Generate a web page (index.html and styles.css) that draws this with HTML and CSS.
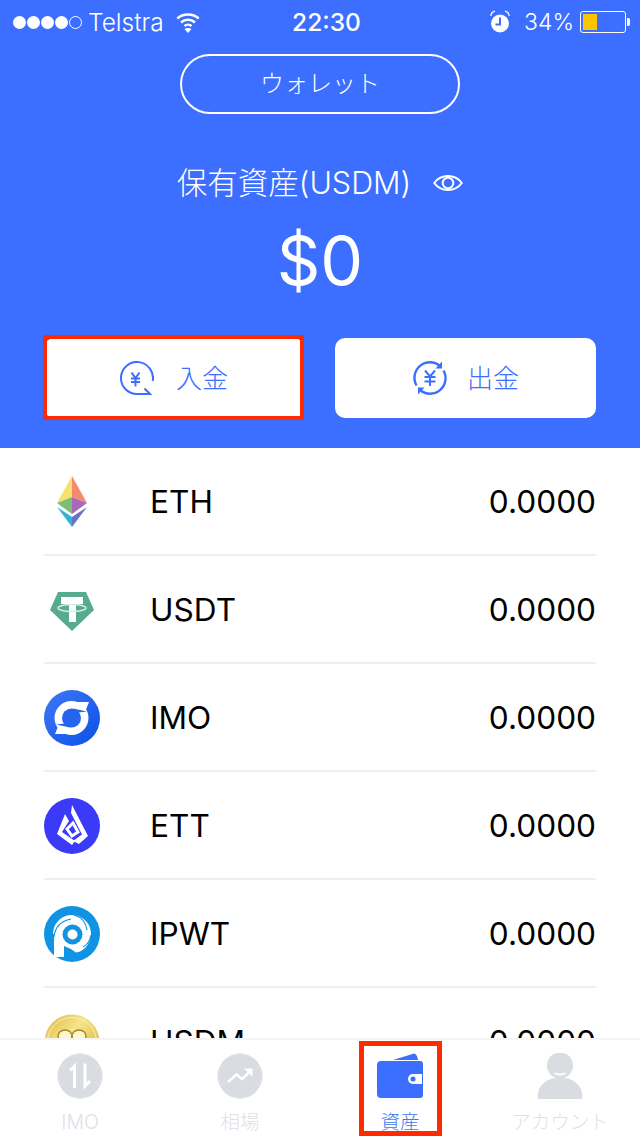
FILE: index.html
```html
<!DOCTYPE html>
<html lang="ja">
<head>
<meta charset="utf-8">
<title>資産</title>
<link rel="stylesheet" href="styles.css">
</head>
<body>
<div class="app">
  <section class="hero">
    <div class="status">
      <div class="status-left">
        <span class="dots"><i class="dot"></i><i class="dot"></i><i class="dot"></i><i class="dot"></i><i class="dot empty"></i></span>
        <span class="carrier">Telstra</span>
        <svg class="wifi" width="24" height="22" viewBox="0 0 24 22"><path d="M1.300 7.500C7 2 17 2 22.700 7.500M5 11.500C9 7.800 15 7.800 19 11.500M8.500 15C10.500 13.300 13.500 13.300 15.500 15" fill="none" stroke="#fff" stroke-width="2.500"/><path d="M12 22l-3.500-4c2-1.500 5-1.500 7 0z" fill="#fff"/></svg>
      </div>
      <span class="time">22:30</span>
      <div class="status-right">
        <svg class="alarm" width="20" height="24" viewBox="0 0 20 24"><circle cx="10" cy="13.500" r="9" fill="#fff"/><path d="M10 7.500V14.500H5.500" fill="none" stroke="#3c6eff" stroke-width="2"/><path d="M.800 6C1 3.500 2.500 1.800 5 1.200M19.200 6C19 3.500 17.500 1.800 15 1.200" fill="none" stroke="#fff" stroke-width="1.300"/></svg>
        <span class="percent">34%</span>
        <span class="battery"><span class="battery-level"></span></span>
        <span class="battery-tip"></span>
      </div>
    </div>
    <button class="wallet-btn">ウォレット</button>
    <div class="balance-label">
      <span class="balance-title">保有資産(USDM)</span>
      <svg width="30" height="20" viewBox="0 0 30 20"><path d="M1.200 10C8 .7 22 .7 28.800 10 22 19.300 8 19.300 1.200 10Z" fill="none" stroke="#fff" stroke-width="2"/><circle cx="15" cy="10" r="5.300" fill="none" stroke="#fff" stroke-width="2"/></svg>
    </div>
    <div class="balance">$0</div>
    <div class="actions">
      <button class="action marked">
        <svg width="34" height="34" viewBox="0 0 34 34"><path d="M32.700 20A16 16 0 1 0 17 33H30L24.500 27.500" fill="none" stroke="#3c6eff" stroke-width="2"/><path d="M11.500 11.500L15.500 17L19.500 11.500M11 17.500H20M11 21H20M15.500 17V25.500" fill="none" stroke="#3c6eff" stroke-width="2"/></svg>
        <span class="action-text">入金</span>
      </button>
      <button class="action">
        <svg width="36" height="36" viewBox="0 0 36 36"><path d="M4.500 25.500A15.500 15.500 0 0 1 28 6M31.500 10.500A15.500 15.500 0 0 1 8 30" fill="none" stroke="#3c6eff" stroke-width="2.400"/><path d="M30 1.500V8.500H23.500ZM6 34.500V27.500H12.500Z" fill="#3c6eff"/><path d="M13 10.500L18 16.500L23 10.500M12.500 17H23.500M12.500 21.500H23.500M18 16.500V26" fill="none" stroke="#3c6eff" stroke-width="2"/></svg>
        <span class="action-text">出金</span>
      </button>
    </div>
  </section>

  <main class="list">
    <div class="row">
      <span class="coin">
        <svg width="56" height="56" viewBox="0 0 56 56">
          <path d="M28 2V23L13 29Z" fill="#f6e16b"/><path d="M28 2V23L43 29Z" fill="#f58a72"/>
          <path d="M13 29L28 23V40Z" fill="#7dbd76"/><path d="M43 29L28 23V40Z" fill="#a569b8"/>
          <path d="M13 33L28 43V53Z" fill="#30b3d6"/><path d="M43 33L28 43V53Z" fill="#6674c4"/>
        </svg>
      </span>
      <span class="symbol">ETH</span><span class="amount">0.0000</span>
    </div>
    <div class="row">
      <span class="coin">
        <svg width="56" height="56" viewBox="0 0 56 56">
          <path d="M14 10H42L50 28L28 49L6 28Z" fill="#57ac8f"/>
          <path d="M17 15H39V22H32V40H25V22H17Z" fill="#fff"/>
          <ellipse cx="28" cy="26" rx="14" ry="3.500" fill="none" stroke="#d6ece4" stroke-width="1.500"/>
        </svg>
      </span>
      <span class="symbol">USDT</span><span class="amount">0.0000</span>
    </div>
    <div class="row">
      <span class="coin">
        <svg width="56" height="56" viewBox="0 0 56 56">
          <defs><linearGradient id="imo" x1="0" y1="0" x2="1" y2="1"><stop offset="0" stop-color="#3f78f5"/><stop offset="1" stop-color="#0a50e8"/></linearGradient></defs>
          <circle cx="28" cy="28" r="28" fill="url(#imo)"/>
          <circle cx="27.500" cy="28" r="17" fill="#fff"/>
          <path d="M27 12H45L41 22H27ZM11 44H28V34H15Z" fill="#fff"/>
          <circle cx="27.500" cy="28" r="9.500" fill="#2464ef"/>
          <path d="M29 18.500L43 21.500L30 23ZM26 37.500L12 34.500L25 33Z" fill="#2464ef"/>
        </svg>
      </span>
      <span class="symbol">IMO</span><span class="amount">0.0000</span>
    </div>
    <div class="row">
      <span class="coin">
        <svg width="56" height="56" viewBox="0 0 56 56">
          <circle cx="28" cy="28" r="28" fill="#3a3af8"/>
          <path d="M28 7L44 38L35 46L29 43L38 36.500L27 15Z" fill="#fff"/>
          <path d="M21 16L25 23L18 34L31 43L28 47L13 36Z" fill="#fff"/>
          <path d="M23 31L29 25L34 34L28 38Z" fill="none" stroke="#fff" stroke-width="3"/>
        </svg>
      </span>
      <span class="symbol">ETT</span><span class="amount">0.0000</span>
    </div>
    <div class="row">
      <span class="coin">
        <svg width="56" height="56" viewBox="0 0 56 56">
          <circle cx="28" cy="28" r="28" fill="#0f93e2"/>
          <path d="M9 28A19 19 0 1 1 32 46.600Q26 42 20 40V51H10V28Z" fill="#fff"/>
          <circle cx="28.500" cy="28.500" r="10" fill="#0f93e2"/>
          <circle cx="28.500" cy="28.500" r="5" fill="#fff"/>
          <path d="M10 31C11 21 17 15 27 13M30 9C37 11 42 16 43 24M47 29C46 35 43 39 39 41" fill="none" stroke="#0f93e2" stroke-width="1.200"/>
        </svg>
      </span>
      <span class="symbol">IPWT</span><span class="amount">0.0000</span>
    </div>
    <div class="row">
      <span class="coin">
        <svg width="56" height="56" viewBox="0 0 56 56">
          <defs><linearGradient id="gold" x1="0" y1="0" x2="1" y2="1"><stop offset="0" stop-color="#d9b53a"/><stop offset=".4" stop-color="#f5e58c"/><stop offset="1" stop-color="#cfa52a"/></linearGradient></defs>
          <circle cx="28" cy="28" r="27.500" fill="url(#gold)"/>
          <circle cx="28" cy="28" r="24.500" fill="none" stroke="#fbf1ad" stroke-width="1"/>
          <ellipse cx="21" cy="22" rx="7" ry="6" fill="#fff6d0" stroke="#a88a22" stroke-width="1.500"/>
          <ellipse cx="35" cy="22" rx="7" ry="6" fill="#fff6d0" stroke="#a88a22" stroke-width="1.500"/>
        </svg>
      </span>
      <span class="symbol">USDM</span><span class="amount">0.0000</span>
    </div>
  </main>

  <nav class="tabs">
    <div class="tab">
      <svg width="46" height="46" viewBox="0 0 46 46"><circle cx="23" cy="23" r="22.500" fill="#d9dce1"/><path d="M17.500 35V13L13 17.500" fill="none" stroke="#fff" stroke-width="3"/><path d="M28 10.500V33L33 28" fill="none" stroke="#fff" stroke-width="3"/></svg>
      <span class="tab-label">IMO</span>
    </div>
    <div class="tab">
      <svg width="46" height="46" viewBox="0 0 46 46"><circle cx="23" cy="23" r="22.500" fill="#d9dce1"/><path d="M11 29L19.500 21.500L25 26L33 18.500" fill="none" stroke="#fff" stroke-width="2.600"/><path d="M27 15.500H35.500V24Z" fill="#fff"/></svg>
      <span class="tab-label">相場</span>
    </div>
    <div class="tab tab-active">
      <svg width="48" height="46" viewBox="0 0 48 46"><path d="M17 7L38 .5Q41 .5 42 7Z" fill="#3c6eff"/><path d="M5 8H44Q47 8 47 11V42Q47 45 44 45H5Q1 45 1 41V12Q1 8 5 8Z" fill="#3c6eff"/><path d="M37 21H46V31H37A5 5 0 0 1 37 21Z" fill="#fff"/><circle cx="37" cy="26" r="2.500" fill="#3c6eff"/></svg>
      <span class="tab-label">資産</span>
    </div>
    <div class="tab">
      <svg width="46" height="46" viewBox="0 0 46 46"><circle cx="23" cy="12.500" r="13" fill="#d9dce1"/><path d="M17 19Q23 22.500 29 19L27.500 21.800Q23 23 18.500 21.800Z" fill="#fff"/><path d="M1 46C-1 33 10 24.500 23 24.500C36 24.500 47 33 45 46Z" fill="#d9dce1"/></svg>
      <span class="tab-label">アカウント</span>
    </div>
  </nav>
</div>
</body>
</html>
```
FILE: styles.css
```css
*, *::before, *::after { box-sizing: border-box; }
html, body { margin: 0; padding: 0; }
body { font-family: Inter, "Noto Sans CJK JP", sans-serif; background: #fff; }
button { font: inherit; border: 0; cursor: pointer; }
.app { width: 640px; height: 1136px; position: relative; overflow: hidden; display: flex; flex-direction: column; }

.hero { height: 448px; flex: none; background: #3c6eff; color: #fff; display: flex; flex-direction: column; align-items: center; }
.status { width: 100%; height: 40px; padding: 4px 0 0 13px; display: grid; grid-template-columns: 1fr auto 1fr; align-items: center; font-size: 24.5px; font-weight: 300; }
.status-left, .status-right { display: flex; align-items: center; }
.status-right { justify-content: flex-end; padding-right: 10px; }
.dots { display: flex; gap: 1px; margin-right: 6px; }
.dot { width: 13px; height: 13px; border-radius: 50%; background: #fff; }
.dot.empty { background: none; border: 1px solid #fff; }
.wifi { margin-left: 12px; }
.time { font-weight: 500; font-size: 24.5px; }
.alarm { margin-right: 14px; }
.percent { margin-right: 6px; font-size: 23px; }
.battery { width: 46px; height: 22px; border: 1px solid #fff; border-radius: 3px; padding: 2px; }
.battery-level { display: block; width: 14px; height: 100%; background: #fcc500; }
.battery-tip { width: 3px; height: 8px; margin-left: 1px; background: #fff; border-radius: 0 2px 2px 0; }

.wallet-btn { width: 280px; height: 60px; margin-top: 14px; padding: 0 0 5px; border: 2px solid #fff; border-radius: 30px; background: none; color: #fff; font-size: 24px; font-weight: 300; }
.balance-label { display: flex; align-items: center; gap: 22px; margin-top: 46px; height: 46px; font-size: 30.5px; font-weight: 300; }
.balance-title { padding-bottom: 4px; }
.balance { margin-top: 24px; height: 60px; line-height: 60px; font-size: 68px; font-weight: 400; }
.actions { width: 552px; margin-top: 48px; display: flex; justify-content: space-between; }
.action { width: 261px; height: 80px; background: #fff; border-radius: 10px; color: #3c6eff; font-size: 26px; font-weight: 300; display: flex; align-items: center; justify-content: center; gap: 19px; }
.action-text { padding-bottom: 4px; }
.action.marked { width: 260px; position: relative; gap: 22px; }
.action.marked::after { content: ""; position: absolute; left: -1px; top: -3px; width: 261px; height: 85px; border: 4px solid #ff2a00; }

.list { flex: 1; min-height: 0; overflow: hidden; padding: 0 44px; }
.row { height: 108px; padding-top: 1px; display: flex; align-items: center; border-bottom: 2px solid #eeeef2; color: #000; font-size: 31.6px; }
.coin { width: 56px; height: 56px; flex: none; }
.coin svg { display: block; }
.symbol { margin-left: 50px; flex: 1; }

.tabs { position: absolute; left: 0; right: 0; bottom: 0; height: 98px; background: #fff; border-top: 2px solid #f5f5f7; display: grid; grid-template-columns: repeat(4, 1fr); }
.tab { display: flex; flex-direction: column; align-items: center; padding-top: 13px; color: #dfe1e6; font-size: 19.500px; font-weight: 300; }
.tab svg { display: block; }
.tab-label { margin-top: 11px; line-height: 24px; }
.tab-active { color: #3c78f0; position: relative; }
.tab-active::after { content: ""; position: absolute; left: 39px; top: 1px; width: 83px; height: 95px; border: 5px solid #ff2a00; }
```
